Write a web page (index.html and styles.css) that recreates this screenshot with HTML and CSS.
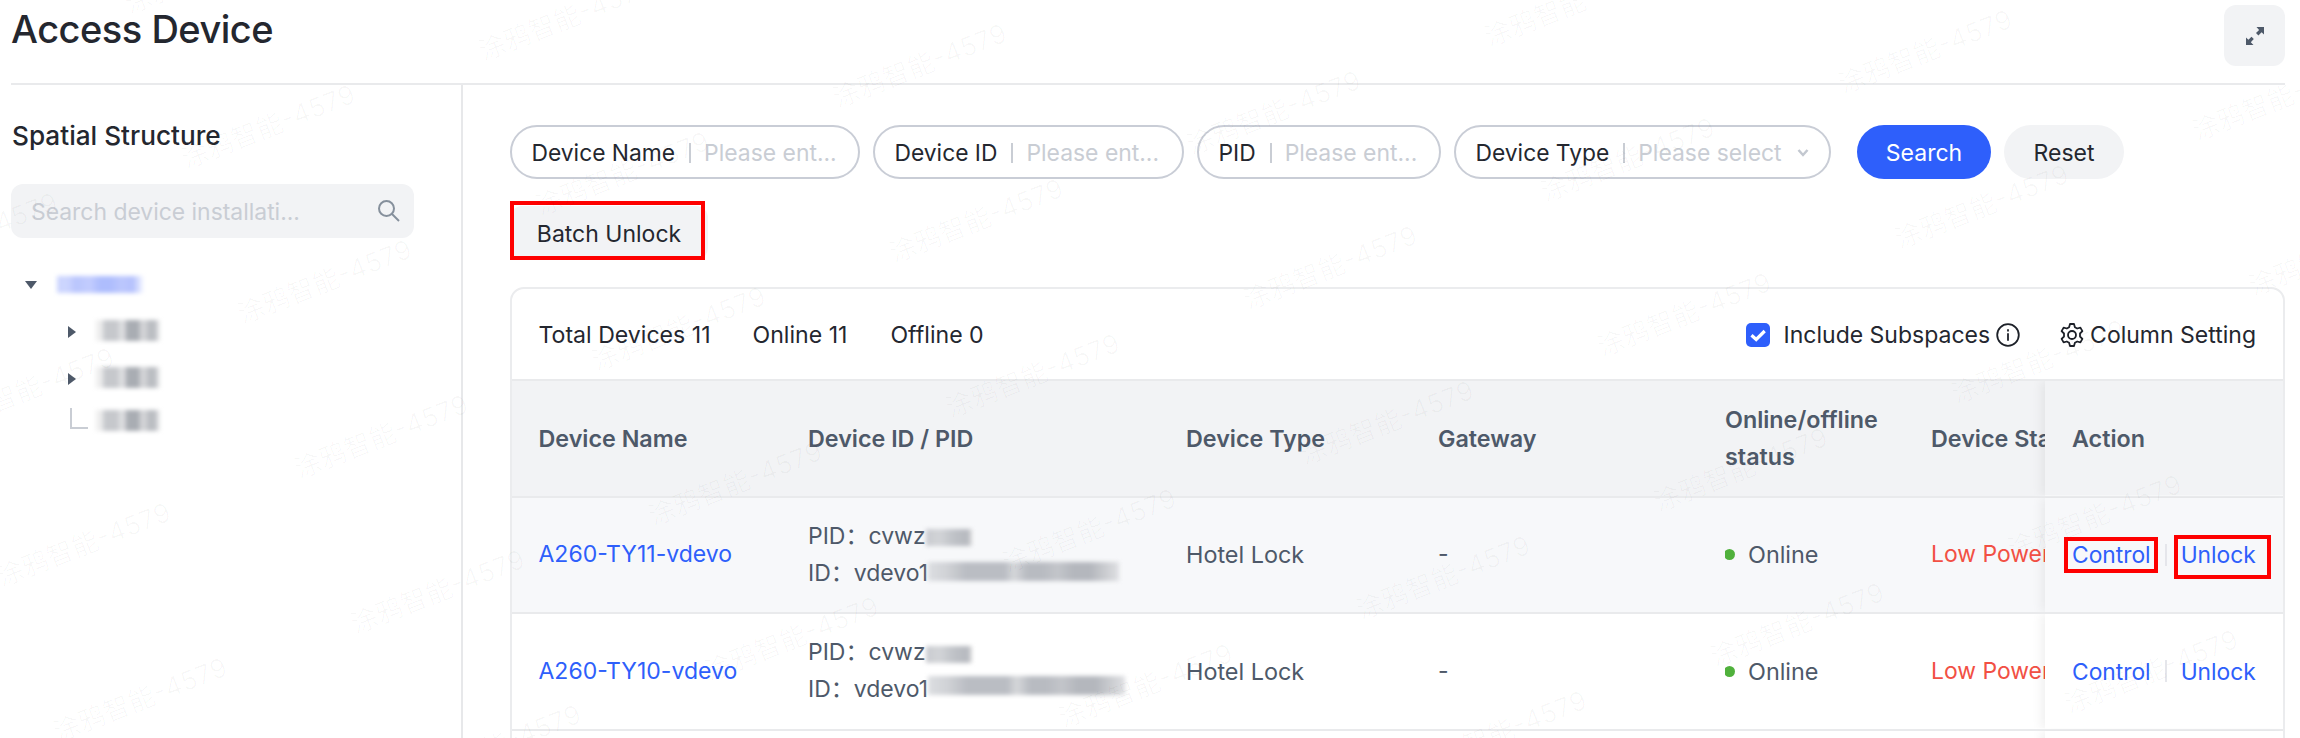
FILE: index.html
```html
<!DOCTYPE html>
<html lang="en">
<head>
<meta charset="utf-8">
<title>Access Device</title>
<link rel="stylesheet" href="styles.css">
</head>
<body>
<div class="page">
  <header class="page-header">
    <h1 class="page-title"><span>Access Device</span></h1>
    <button class="expand-btn" aria-label="Fullscreen">
      <svg width="20" height="20" viewBox="0 0 20 20"><path d="M11.500 1h7.500v7.500l-2.400-2.200-3.200 3.200-2.400-2.400 3.100-3.200zM1 19v-7.500l2.400 2.300 3.100-3 2.300 2.300-3 3.100L8.500 19z" fill="#4e5969"/></svg>
    </button>
  </header>
  <div class="body">
    <aside class="sidebar">
      <h2 class="side-title"><span>Spatial Structure</span></h2>
      <div class="side-search">
        <span class="placeholder">Search device installati...</span>
        <svg class="search-icon" width="24" height="24" viewBox="0 0 24 24" fill="none" stroke="#86909c" stroke-width="2"><circle cx="9.500" cy="9.500" r="7.500"/><path d="M15 15l7 7"/></svg>
      </div>
      <ul class="tree">
        <li class="node root"><i class="caret-down"></i><span class="mask mask-root"></span></li>
        <li class="node child"><i class="caret-right"></i><span class="mask mask-child"></span></li>
        <li class="node child"><i class="caret-right"></i><span class="mask mask-child"></span></li>
        <li class="node child leaf"><i class="elbow"></i><span class="mask mask-child"></span></li>
      </ul>
    </aside>
    <main class="main">
      <div class="filters">
        <label class="filter f-name"><span class="f-label">Device Name</span><i class="bar"></i><span class="placeholder">Please ent...</span></label>
        <label class="filter f-id"><span class="f-label">Device ID</span><i class="bar"></i><span class="placeholder">Please ent...</span></label>
        <label class="filter f-pid"><span class="f-label">PID</span><i class="bar"></i><span class="placeholder">Please ent...</span></label>
        <label class="filter f-type"><span class="f-label">Device Type</span><i class="bar"></i><span class="placeholder">Please select</span>
          <svg class="chevron" width="12" height="10" viewBox="0 0 12 10" fill="none" stroke="#c3c8d0" stroke-width="2.500"><path d="M1.500 2L6 7l4.500-5"/></svg></label>
        <button class="btn btn-primary">Search</button>
        <button class="btn btn-plain">Reset</button>
      </div>
      <div class="batch"><button class="btn-batch">Batch Unlock</button><span class="mark mark-batch"></span></div>
      <section class="card">
        <div class="toolbar">
          <span class="st1">Total Devices 11</span><span class="st2">Online 11</span><span class="st3">Offline 0</span>
          <span class="check"><svg width="24" height="24" viewBox="0 0 24 24"><rect width="24" height="24" rx="5" fill="#2e5ffb"/><path d="M5.500 12.200l4.700 4.300 8.500-8.500" fill="none" stroke="#fff" stroke-width="3.200"/></svg></span>
          <span class="inc">Include Subspaces</span>
          <svg class="info" width="24" height="24" viewBox="0 0 24 24" fill="none" stroke="#1d2129" stroke-width="1.800"><circle cx="12" cy="12" r="10.800"/><path d="M12 10.300v7.400M12 6.300v2.200"/></svg>
          <svg class="gear" width="24" height="24" viewBox="0 0 24 24" fill="none" stroke="#1d2129" stroke-width="1.800" stroke-linejoin="round"><path d="M10 1h4l.9 3.200 2.300 1.300 3.200-.9 2 3.500L20 10.500v3l2.400 2.400-2 3.500-3.200-.9-2.300 1.300L14 23h-4l-.9-3.200-2.300-1.300-3.200.9-2-3.500L4 13.500v-3L1.600 8.100l2-3.500 3.200.9 2.300-1.300z"/><circle cx="12" cy="12" r="4"/></svg>
          <span class="colset">Column Setting</span>
        </div>
        <div class="table">
          <div class="row head">
            <div class="c1">Device Name</div><div class="c2">Device ID / PID</div><div class="c3">Device Type</div><div class="c4">Gateway</div><div class="c5">Online/offline<br>status</div><div class="c6">Device Status</div>
            <div class="c7">Action</div>
          </div>
          <div class="row hover">
            <div class="c1"><a>A260-TY11-vdevo</a></div>
            <div class="c2"><p class="idline">PID：cvwz<span class="mask mask-pid"></span></p><p class="idline">ID：vdevo1<span class="mask mask-id"></span></p></div>
            <div class="c3">Hotel Lock</div><div class="c4">-</div><div class="c5"><i class="dot"></i>Online</div><div class="c6 low">Low Power</div>
            <div class="c7"><a class="control">Control</a><i class="sep"></i><a class="unlock">Unlock</a><span class="mark mark-control"></span><span class="mark mark-unlock"></span></div>
          </div>
          <div class="row">
            <div class="c1"><a>A260-TY10-vdevo</a></div>
            <div class="c2"><p class="idline">PID：cvwz<span class="mask mask-pid"></span></p><p class="idline">ID：vdevo1<span class="mask mask-id wide"></span></p></div>
            <div class="c3">Hotel Lock</div><div class="c4">-</div><div class="c5"><i class="dot"></i>Online</div><div class="c6 low">Low Power</div>
            <div class="c7"><a class="control">Control</a><i class="sep"></i><a class="unlock">Unlock</a></div>
          </div>
          <div class="row"><div class="c1"></div><div class="c2"></div><div class="c3"></div><div class="c4"></div><div class="c5"></div><div class="c6"></div><div class="c7"></div></div>
        </div>
      </section>
    </main>
  </div>
</div>
<svg class="watermark" id="watermark" width="2300" height="738" viewBox="0 0 2300 738"></svg>
<script src="watermark.js"></script>
</body>
</html>
```
FILE: styles.css
```css
* { box-sizing: border-box; margin: 0; padding: 0; }
body { font-family: Inter, "Noto Sans CJK SC", sans-serif; font-size: 23px; color: #24272f; background: #fff; overflow: hidden; }
button { font: inherit; border: 0; color: inherit; }
i { display: block; flex: none; }
.page { position: relative; width: 2300px; height: 738px; overflow: hidden; padding: 0 15px 0 11px; display: flex; flex-direction: column; }
.page-header { height: 85px; flex: none; border-bottom: 2px solid #e9eaec; display: flex; justify-content: space-between; align-items: flex-start; }
.page-title { font-size: 38px; font-weight: 500; line-height: 48px; padding-top: 5px; letter-spacing: -.5px; }
.expand-btn { width: 61px; height: 61px; margin-top: 5px; border-radius: 12px; background: #f2f3f5; display: flex; align-items: center; justify-content: center; }
.body { display: flex; flex: 1; min-height: 0; }
.sidebar { width: 452px; flex: none; border-right: 2px solid #e7e8ea; }
.side-title { font-size: 26.200px; font-weight: 500; line-height: 36px; margin-top: 33px; padding-left: 1px; }
.side-search { width: 403px; height: 54px; margin-top: 30px; background: #f2f3f5; border-radius: 12px; display: flex; align-items: center; justify-content: space-between; padding: 0 13px 0 20px; }
.placeholder { color: #c9cdd4; }
.side-search .placeholder { font-size: 22.900px; padding-top: 1px; }
.tree { list-style: none; margin-top: 23px; }
.node { display: flex; align-items: center; height: 47px; }
.root { padding-left: 14px; }
.child { padding-left: 57px; }
.leaf { height: 38px; }
.caret-down { border: 6px solid transparent; border-top: 8px solid #4e5969; border-bottom: 0; width: 12px; }
.caret-right { border: 6px solid transparent; border-left: 8px solid #4e5969; border-right: 0; }
.elbow { width: 18px; height: 21px; margin-left: 2px; margin-top: -5px; border-left: 2px solid #c9cdd4; border-bottom: 2px solid #c9cdd4; }
.mask { display: inline-block; flex: none; filter: blur(2.200px); }
.mask-root { width: 86px; height: 17px; margin-left: 20px; background: linear-gradient(90deg, #ccd5fe 0 12%, #b9c5fd 22%, #c3cdfe 38%, #aebdfd 50% 62%, #bcc7fd 75%, #b4c1fd 88%, #f3f5ff 100%); }
.mask-child { width: 64px; height: 21px; margin-left: 20px; margin-top: -3px; background: linear-gradient(90deg, #eee 0 8%, #c6c8cc 14% 33%, #dcdddf 37% 44%, #a9adb3 49% 66%, #d2d3d6 70% 78%, #babdc2 82% 92%, #f4f4f4 100%); }
.leaf .mask-child { margin-left: 8px; margin-top: -1px; }
.main { flex: 1; padding: 40px 0 0 47px; min-width: 0; }
.filters { display: flex; height: 54px; white-space: nowrap; }
.filter { height: 54px; border: 2px solid #c9cdd6; border-radius: 27px; display: flex; align-items: center; padding: 1px 0 0 19.500px; margin-right: 13px; }
.f-name { width: 350px; } .f-id { width: 311px; } .f-pid { width: 244px; } .f-type { width: 377px; }
.bar { width: 2px; height: 20px; background: #c9cdd4; margin: 0 13px 0 14px; }
.f-label { font-size: 22.800px; }
.filter .placeholder { font-size: 22.900px; }
.chevron { margin-left: 15px; }
.btn { height: 54px; border-radius: 27px; padding-top: 1px; }
.btn-primary { width: 134px; background: #2e5ffb; color: #fff; margin: 0 13px; }
.btn-plain { width: 120px; background: #f2f3f5; }
.batch { position: relative; width: 198px; height: 54px; margin-top: 27px; }
.btn-batch { width: 198px; height: 54px; padding-top: 1px; border-radius: 12px; background: #f2f3f5; }
.mark { position: absolute; border: 4px solid #fe0000; }
.mark-batch { left: 0; top: -5px; width: 195px; height: 59px; }
.card { margin-top: 27px; height: 470px; border: 2px solid #ebecee; border-radius: 14px 14px 0 0; overflow: hidden; }
.toolbar { display: flex; align-items: center; height: 90px; padding: 2px 27px 0 26.500px; white-space: nowrap; }
.st1 { margin-right: 42px; }
.st2 { margin-right: 43px; }
.st1, .st2, .st3 { font-size: 23.100px; }
.check { margin-left: auto; height: 24px; }
.inc { margin-left: 14px; }
.info { margin-left: 6px; }
.gear { margin: 0 6px 0 40px; }
.row { position: relative; display: grid; grid-template-columns: 296px 378px 252px 287px 206px 114px 239px; height: 116.500px; border-top: 2px solid #e9eaec; color: #4e5969; line-height: 37px; white-space: nowrap; }
.row > div { display: flex; align-items: center; overflow: hidden; background: #fff; }
.row > .c2 { flex-direction: column; align-items: flex-start; justify-content: center; }
.row > .c1 { padding-left: 26.500px; }
.row.head > .c2, .row.head > .c5 { flex-direction: row; justify-content: flex-start; align-items: center; }
.row > .c3, .row > .c5 { font-size: 23.400px; }
.head, .row.head > div { font-weight: 600; font-size: 23.300px; }
.row.head > div { background: #f2f3f5; }
.row.hover > div { background: #f7f8fa; }
.row > .c7 { position: relative; padding-left: 27px; overflow: visible; box-shadow: -4px 0 10px rgba(0,0,0,.06); clip-path: inset(0 0 0 -14px); }
.row a { color: #2e5ffb; font-size: 23px; }
.row .c7 a { font-size: 22.800px; }
.idline { display: flex; align-items: center; height: 37px; }
.mask-pid { width: 46px; height: 17px; margin-top: 3px; background: linear-gradient(90deg, #c9cbd0, #d2d4d7 30%, #bfc2c7 60%, #b6b9bf 90%, #ddd); }
.mask-id { width: 191px; height: 19px; margin-top: -3px; background: linear-gradient(90deg, #dcdee1 0, #d0d2d6 10%, #babdc3 20% 40%, #d5d7da 45%, #b8bbc1 52% 60%, #c3c5ca 68%, #b4b7bd 76% 85%, #c8cace 92%, #dfe0e3 100%); }
.mask-id.wide { width: 197px; margin-top: -8px; }
.dot { width: 11px; height: 11px; border-radius: 50%; background: #50b13c; margin: 0 13px 0 -1px; }
.row > .low { color: #f25044; font-size: 22.900px; }
.sep { width: 2px; height: 22px; background: #e5e6eb; margin: 0 14px; }
.mark-control { left: 19px; top: 39px; width: 94px; height: 36px; }
.mark-unlock { left: 129px; top: 37px; width: 97px; height: 44px; }
.watermark { position: absolute; left: 0; top: 0; pointer-events: none; font-family: Inter, "Noto Sans CJK SC", sans-serif; }
```
FILE: watermark.js
```js
// Tiles slanted labels over the page on two independent lattices.
const svg = document.getElementById("watermark");
function tile(text, x0, y0, ax, ay, bx, by, size, length, opacity) {
  for (let i = -4; i < 9; i++) {
    for (let j = -4; j < 8; j++) {
      const x = x0 + i * ax + j * bx, y = y0 + i * ay + j * by;
      if (x < -350 || x > 2320 || y < -20 || y > 900) continue;
      const t = document.createElementNS("http://www.w3.org/2000/svg", "text");
      t.textContent = text;
      t.setAttribute("transform", `translate(${x} ${y}) rotate(-21.500)`);
      t.setAttribute("font-size", size);
      t.setAttribute("textLength", length);
      t.setAttribute("fill", "#000");
      t.setAttribute("fill-opacity", opacity);
      svg.appendChild(t);
    }
  }
}
tile("涂鸦智能-4579", 186, 169, 354, 47, 56.500, 155, 26.500, 184, 0.026);
tile("2025/10/11 14:01-2643", 141, 123, 530, 17, 67, 185, 29, 334, 0.010);
```
